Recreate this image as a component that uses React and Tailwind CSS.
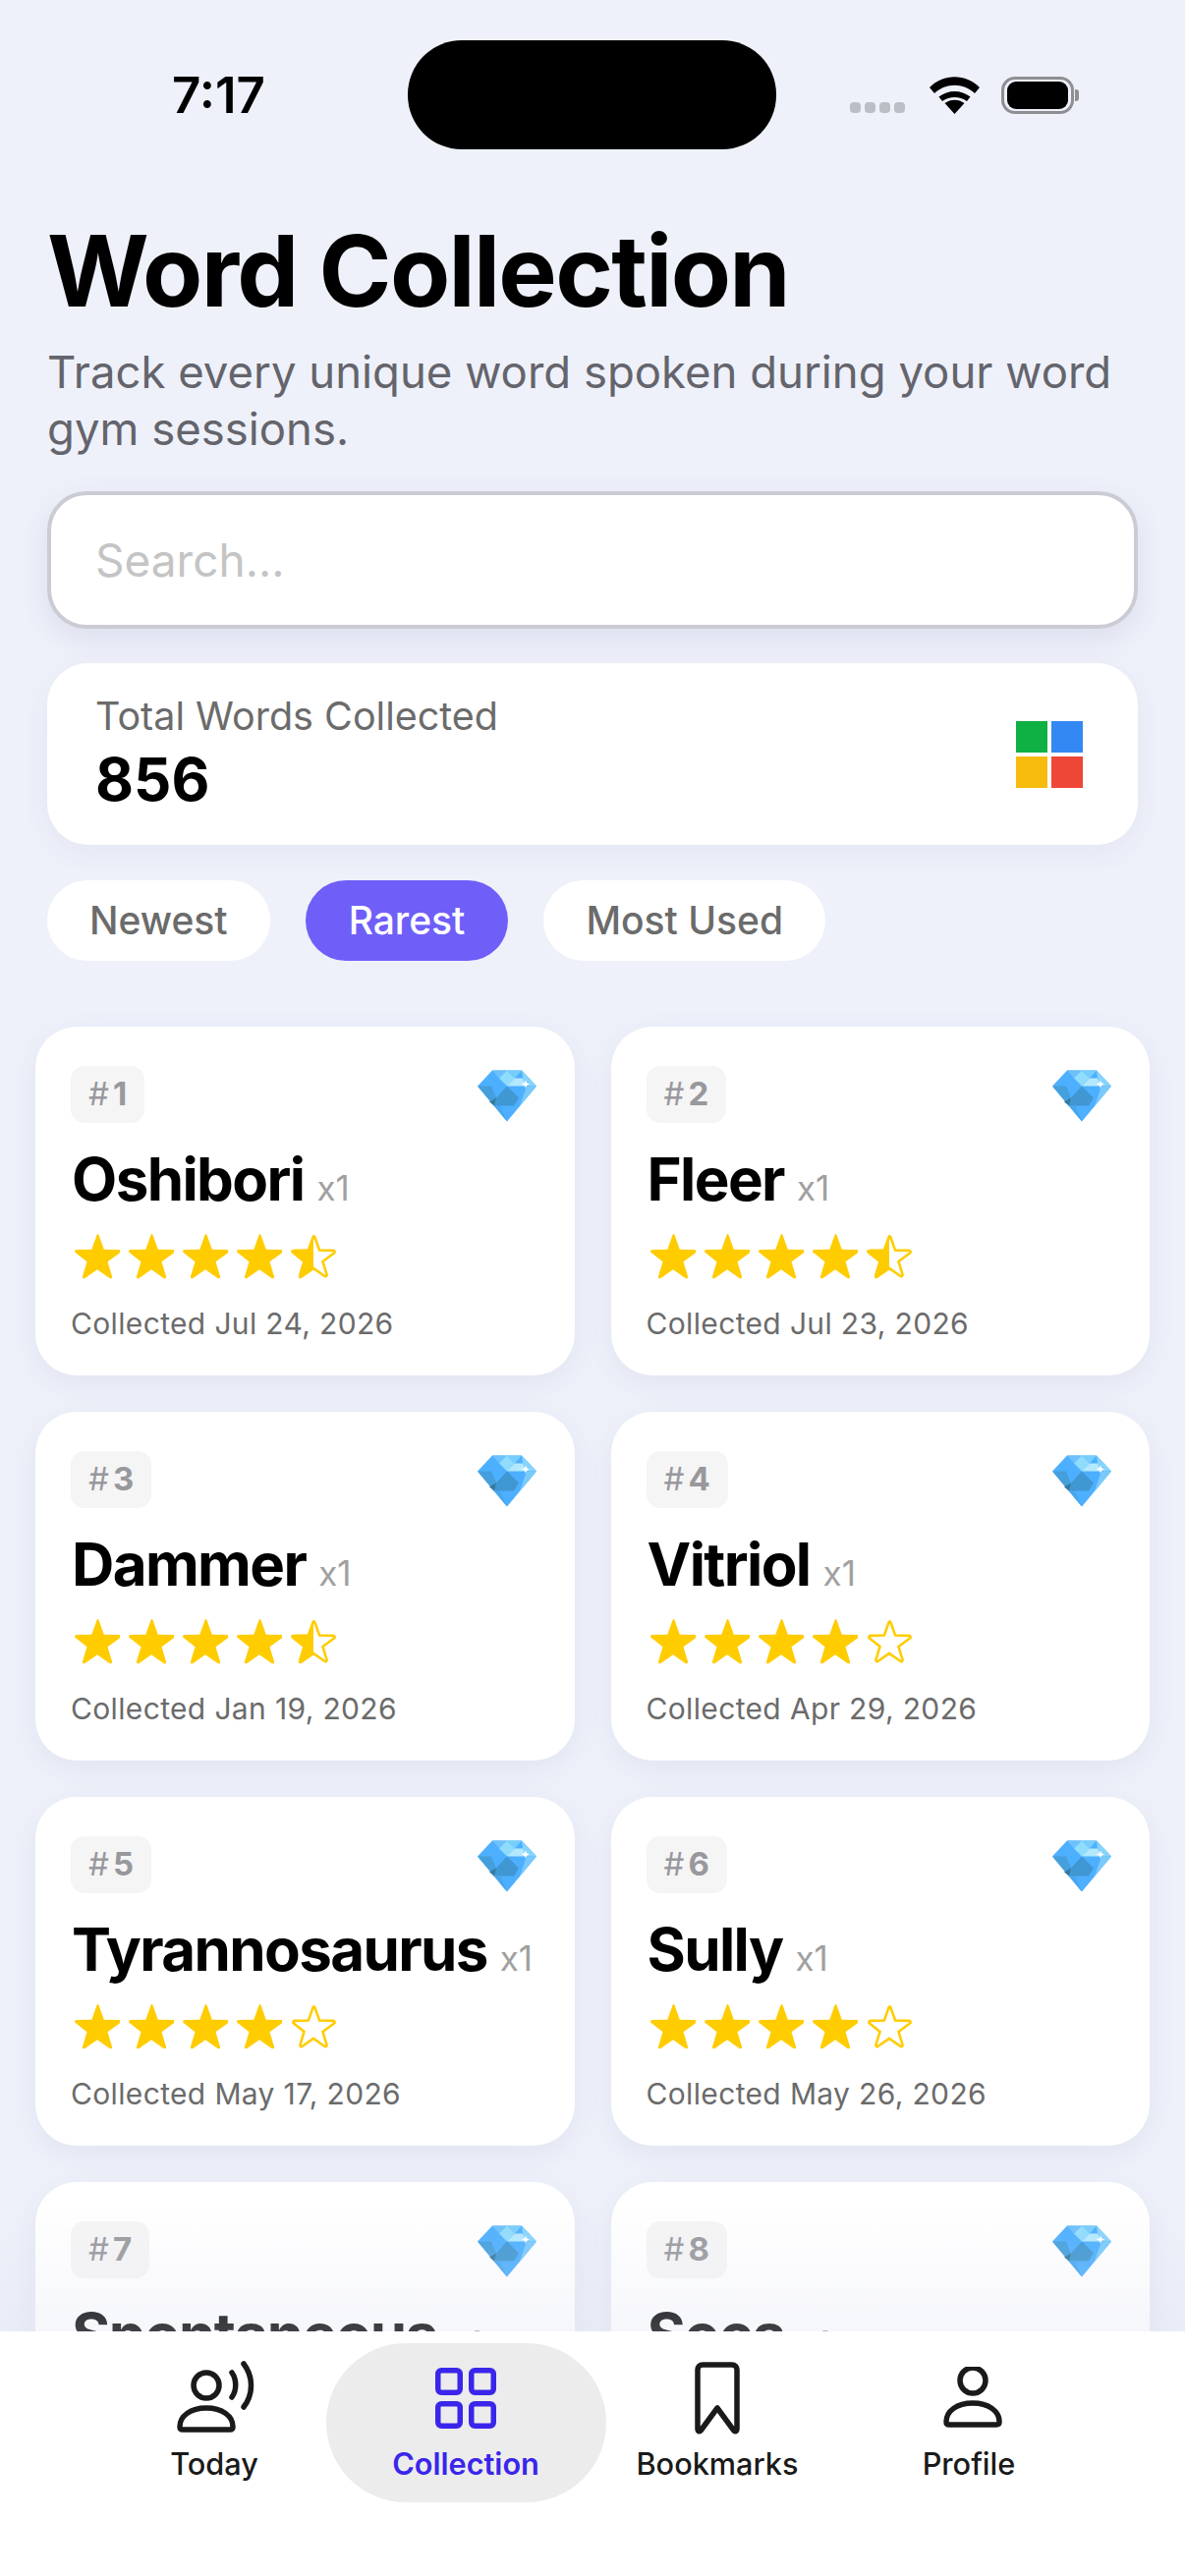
const words = [
  { rank: 1, word: 'Oshibori', stars: 4.5, date: 'Jul 24, 2026' },
  { rank: 2, word: 'Fleer', stars: 4.5, date: 'Jul 23, 2026' },
  { rank: 3, word: 'Dammer', stars: 4.5, date: 'Jan 19, 2026' },
  { rank: 4, word: 'Vitriol', stars: 4, date: 'Apr 29, 2026' },
  { rank: 5, word: 'Tyrannosaurus', stars: 4, date: 'May 17, 2026' },
  { rank: 6, word: 'Sully', stars: 4, date: 'May 26, 2026' },
  { rank: 7, word: 'Spontaneous', stars: 4, date: 'Jun 2, 2026' },
  { rank: 8, word: 'Soca', stars: 4, date: 'Jun 8, 2026' },
]

const STAR = 'M23 3.5c.7 0 1.2.4 1.5 1.2l4.7 13.2 14.2.3c1.5 0 2.1 1.8.9 2.7L32.6 29.4l4.1 13.5c.4 1.4-1.1 2.5-2.3 1.6L23 36.5l-11.4 8c-1.2.9-2.7-.2-2.3-1.6l4.1-13.5L2.7 20.9c-1.2-.9-.6-2.7.9-2.7l14.2-.3 4.7-13.2c.3-.8.8-1.2 1.5-1.2z'

function Star({ fill, id }) {
  return (
    <svg width="46" height="46" viewBox="2 3.500 42 42">
      {fill === 'half' && (
        <clipPath id={id}>
          <rect x="0" y="0" width="23" height="47" />
        </clipPath>
      )}
      {fill === 'full' && <path d={STAR} fill="#ffcc00" />}
      {fill === 'half' && <path d={STAR} fill="#ffcc00" clipPath={`url(#${id})`} />}
      {fill !== 'full' && <path d={STAR} fill="none" stroke="#ffcc00" strokeWidth="2.600" transform="translate(2.300 2.500) scale(.9)" />}
    </svg>
  )
}

function Diamond() {
  return (
    <svg width="60" height="53" viewBox="0 0 60 52">
      <path d="M15 0h30l15 16-30 36L0 16z" fill="#4dafff" />
      <path d="M15 0h15l-8 8z" fill="#6cc0fb" />
      <path d="M22 8l8-8 8 8-8 8z" fill="#8fdcfd" />
      <path d="M30 0h15l-7 8z" fill="#77cdfb" />
      <path d="M38 8h8l4 8H30z" fill="#b4e9fd" />
      <path d="M45 0l15 16H50l-4-8z" fill="#86d3fb" />
      <path d="M60 16L30 52l13-16 7-20z" fill="#79c9fa" />
      <path d="M0 16h14l5 12-2 8 3 4z" fill="#459fdc" />
      <path d="M20 40l10 12-7-16h-6z" fill="#48a6ec" />
      <path d="M30 16l12 12-5 8H17l2-8z" fill="#4097d2" />
      <path d="M12 32l7-4-2 8z" fill="#33799f" />
      <path d="M49 9c.4 3.400 1.400 4.400 4.500 5-3.100.6-4.100 1.600-4.500 5-.4-3.400-1.400-4.400-4.500-5 3.100-.6 4.100-1.600 4.500-5z" fill="#fff" />
    </svg>
  )
}

function WordCard({ item }) {
  const stars = [1, 2, 3, 4, 5].map((n) => {
    if (item.stars >= n) return 'full'
    if (item.stars >= n - 0.5) return 'half'
    return 'empty'
  })
  return (
    <div className="h-[355px] rounded-[42px] bg-white pl-[36px] pr-[39px] pt-[40px] shadow-[0_8px_30px_rgba(60,70,120,0.07)]">
      <div className="flex items-start justify-between">
        <div className="flex h-[58px] items-center gap-[4px] rounded-[14px] bg-[#f5f5f5] px-[18px] text-[33px] text-[#98989d]">
          <span className="font-normal">#</span>
          <span className="font-bold">{item.rank}</span>
        </div>
        <div className="mt-[4px]"><Diamond /></div>
      </div>
      <div className="mt-[21px] ml-[1px] flex items-baseline gap-[13px] whitespace-nowrap">
        <span className="text-[60px] leading-[72px] font-bold tracking-[-1.6px] text-black">{item.word}</span>
        <span className="text-[35px] text-[#a0a0a0]">x1</span>
      </div>
      <div className="mt-[20px] ml-[4px] flex gap-[9px]">
        {stars.map((s, i) => <Star key={i} fill={s} id={`half-${item.rank}-${i}`} />)}
      </div>
      <div className="mt-[27px] text-[30px] leading-[36px] tracking-[0.35px] text-[#6b6b6b]">Collected {item.date}</div>
    </div>
  )
}

function StatusBar() {
  return (
    <div className="flex h-[152px] items-start pt-[41px]">
      <div className="w-[415px] pt-[30px] pl-[175px] text-[51px] leading-[52px] font-semibold text-black">7:17</div>
      <div className="h-[111px] w-[375px] rounded-[55px] bg-black" />
      <div className="flex items-end pt-[37px] pl-[75px]">
        <div className="mb-[1px] flex gap-[4px]">
          <span className="h-[11px] w-[11px] rounded-[4px] bg-[#bcbec6]" />
          <span className="h-[11px] w-[11px] rounded-[4px] bg-[#bcbec6]" />
          <span className="h-[11px] w-[11px] rounded-[4px] bg-[#bcbec6]" />
          <span className="h-[11px] w-[11px] rounded-[4px] bg-[#bcbec6]" />
        </div>
        <svg className="ml-[25px]" width="51" height="38" viewBox="0 0 51 38">
          <path d="M25.500 38L15.500 27c6-4.500 14-4.500 20 0z" fill="#000" />
          <path d="M9.500 20.500c9-7.500 23-7.500 32 0l-3.500 4.500c-7.500-5.500-17.500-5.500-25 0z" fill="#000" />
          <path d="M0 11C14-3.500 37-3.500 51 11l-5 6C34.500 6 16.500 6 5 17z" fill="#000" />
        </svg>
        <div className="ml-[22px] flex items-center">
          <div className="flex h-[38px] w-[74px] items-center justify-center rounded-[14px] border-[3px] border-[#8e8e93]">
            <div className="h-[28px] w-[62px] rounded-[9px] bg-black" />
          </div>
          <div className="ml-[1px] h-[12px] w-[4px] rounded-r-[3px] bg-[#8e8e93]" />
        </div>
      </div>
    </div>
  )
}

function NavItem({ label, active, children }) {
  return (
    <div className={`flex w-[256px] flex-col items-center ${active ? 'text-[#3a26ea]' : 'text-[#1a1a1a]'}`}>
      <div className="flex h-[80px] items-center justify-center">{children}</div>
      <span className={`mt-[9px] text-[30.700px] leading-[36px] ${active ? 'font-semibold' : 'font-medium'}`}>{label}</span>
    </div>
  )
}

export default function App() {
  return (
    <div className="relative h-[2622px] w-[1206px] overflow-hidden bg-[#eef1fa] font-['Inter',sans-serif]">
      <StatusBar />

      <div className="px-[48px]">
        <h1 className="mt-[64px] text-[100px] leading-[120px] font-bold tracking-[-1.7px] text-black">Word Collection</h1>
        <p className="mt-[14px] text-[45.500px] leading-[58px] text-[#64646c]">Track every unique word spoken during your word gym sessions.</p>

        <div className="mt-[34px] h-[140px] rounded-[40px] border-[4px] border-[#cbcbd4] bg-white shadow-[0_10px_30px_rgba(60,70,120,0.1)]">
          <input
            readOnly
            placeholder="Search..."
            className="h-full w-full bg-transparent pl-[45px] text-[46px] outline-none placeholder:text-[#c4c4c4]"
          />
        </div>

        <div className="mt-[35px] flex h-[185px] items-center justify-between rounded-[42px] bg-white pl-[49px] pr-[56px] shadow-[0_8px_30px_rgba(60,70,120,0.06)]">
          <div className="-mt-[1px]">
            <div className="text-[39.500px] leading-[46px] text-[#6b6b6b]">Total Words Collected</div>
            <div className="mt-[5px] text-[60px] leading-[72px] font-bold text-black">856</div>
          </div>
          <div className="grid grid-cols-2 gap-x-[4px] gap-y-[4px]">
            <span className="h-[32px] w-[32px] bg-[#0fb044]" />
            <span className="h-[32px] w-[32px] bg-[#3388f3]" />
            <span className="h-[32px] w-[32px] bg-[#f6bb0b]" />
            <span className="h-[32px] w-[32px] bg-[#ee4637]" />
          </div>
        </div>

        <div className="mt-[36px] flex gap-[36px]">
          <div className="flex h-[82px] items-center rounded-[41px] bg-white px-[43px] text-[39px] font-medium text-[#6b6b6b]">Newest</div>
          <div className="flex h-[82px] items-center rounded-[41px] bg-[#6f5ff8] px-[44px] text-[39px] font-medium text-white">Rarest</div>
          <div className="flex h-[82px] items-center rounded-[41px] bg-white px-[43px] text-[39px] font-medium text-[#6b6b6b]">Most Used</div>
        </div>
      </div>

      <div className="mt-[67px] grid grid-cols-2 gap-x-[37px] gap-y-[37px] pl-[36px] pr-[36px]">
        {words.map((w) => <WordCard key={w.rank} item={w} />)}
      </div>

      <div className="absolute right-0 bottom-[249px] left-0 h-[130px] bg-gradient-to-b from-[#dfe2f000] to-[#dfe2f048]" />

      <div className="absolute right-0 bottom-0 left-0 h-[249px] bg-white">
        <div className="absolute top-[12px] left-[332px] h-[162px] w-[285px] rounded-[81px] bg-[#ececec]" />
        <div className="relative flex pt-[28px] pl-[90px]">
          <NavItem label="Today">
            <svg width="84" height="80" viewBox="0 0 84 80" fill="none" stroke="currentColor" strokeWidth="5.500" strokeLinecap="round" strokeLinejoin="round">
              <circle cx="34" cy="27" r="13" />
              <path d="M7 69c0-11 11-19 27-19s27 8 27 19c0 2-1 3-3 3H10c-2 0-3-1-3-3z" />
              <path d="M60 14c5 7 5 18 0 25" />
              <path d="M72 5c10 13 10 31 0 44" />
            </svg>
          </NavItem>
          <NavItem label="Collection" active>
            <svg width="62" height="62" viewBox="0 0 62 62" fill="none" stroke="currentColor" strokeWidth="5.500">
              <rect x="2.750" y="2.750" width="22.500" height="22.500" rx="3.500" />
              <rect x="36.750" y="2.750" width="22.500" height="22.500" rx="3.500" />
              <rect x="2.750" y="36.750" width="22.500" height="22.500" rx="3.500" />
              <rect x="36.750" y="36.750" width="22.500" height="22.500" rx="3.500" />
            </svg>
          </NavItem>
          <NavItem label="Bookmarks">
            <svg width="46" height="74" viewBox="0 0 46 74" fill="none" stroke="currentColor" strokeWidth="5.500" strokeLinejoin="round">
              <path d="M3 8c0-3 2-5 5-5h30c3 0 5 2 5 5v60c0 3-2 3.500-3.500 1.500L23 47 6.500 69.500C5 71.500 3 71 3 68z" />
            </svg>
          </NavItem>
          <NavItem label="Profile">
            <svg className="ml-[8px]" width="60" height="64" viewBox="4 13 60 64" fill="none" stroke="currentColor" strokeWidth="5.500" strokeLinecap="round" strokeLinejoin="round">
              <circle cx="34" cy="27" r="13" />
              <path d="M7 69c0-11 11-19 27-19s27 8 27 19c0 2-1 3-3 3H10c-2 0-3-1-3-3z" />
            </svg>
          </NavItem>
        </div>
      </div>
    </div>
  )
}
